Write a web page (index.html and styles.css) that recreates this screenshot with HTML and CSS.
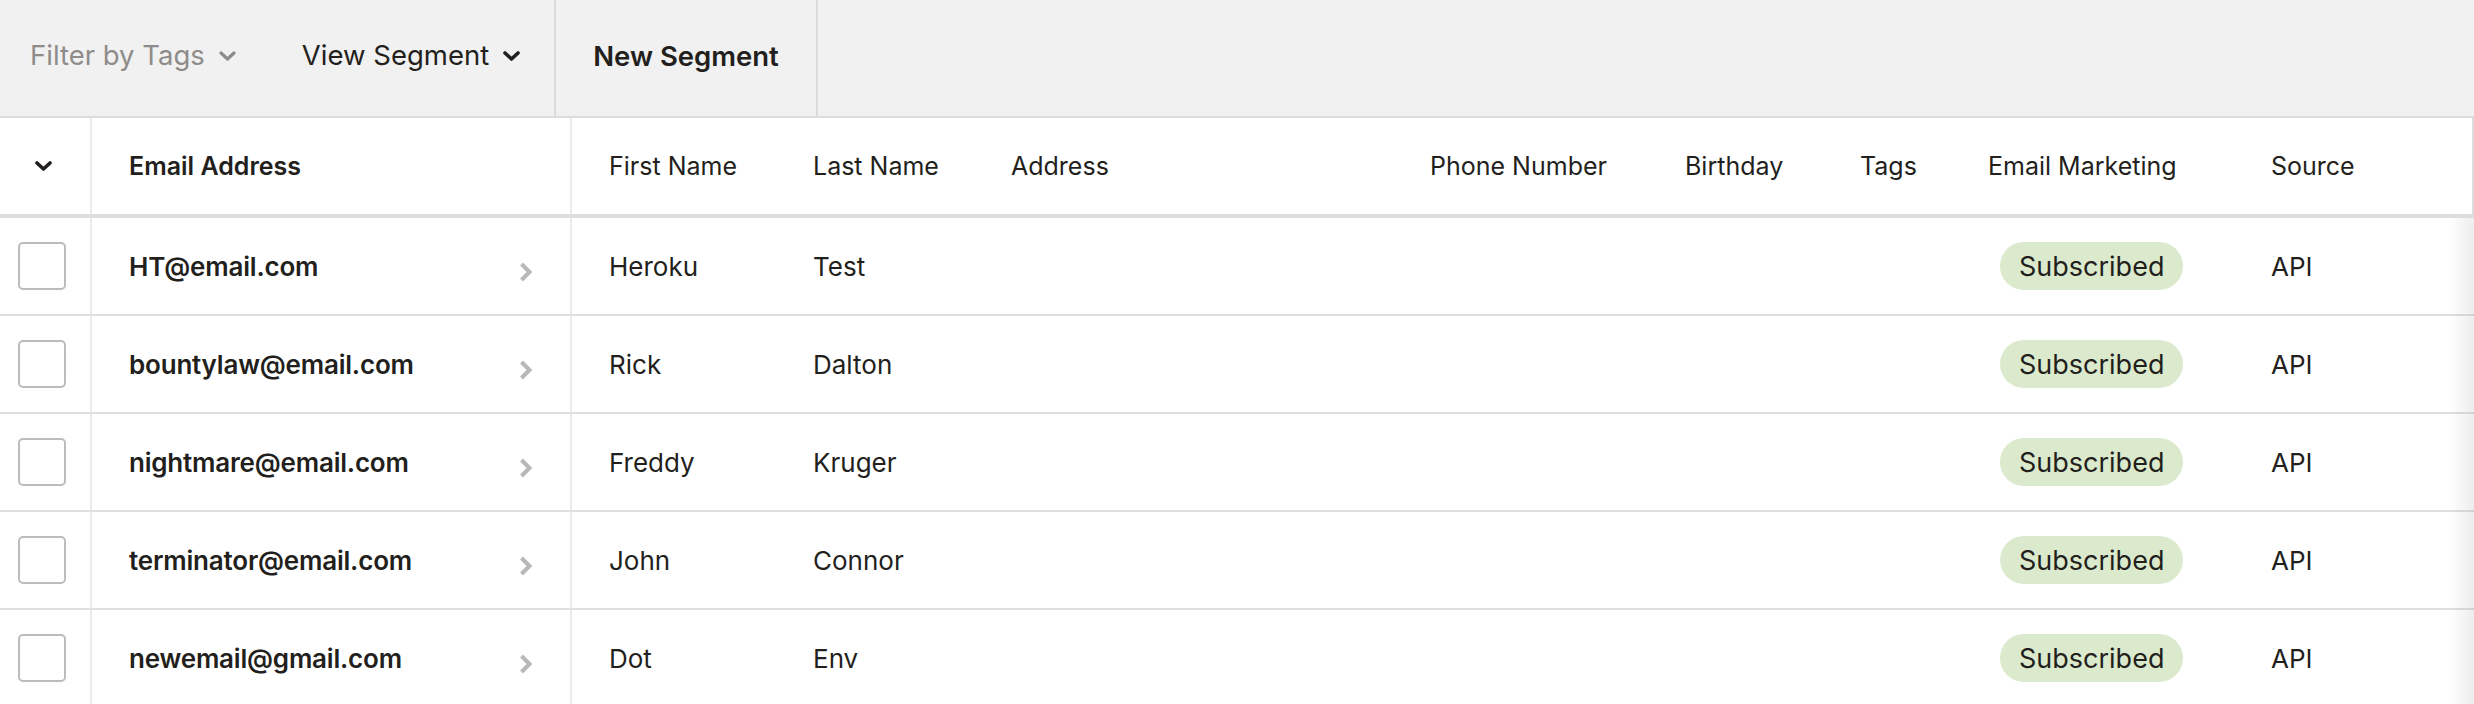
FILE: index.html
```html
<!DOCTYPE html>
<html lang="en">
<head>
<meta charset="utf-8">
<title>Contacts</title>
<link rel="stylesheet" href="styles.css">
</head>
<body>
<div class="page">
  <div class="toolbar">
    <button class="tool tool-filter">Filter by Tags
      <svg class="caret" width="17" height="10" viewBox="0 0 17 10"><path d="M2 2 L8.5 8 L15 2" fill="none" stroke="currentColor" stroke-width="3.2" stroke-linecap="round" stroke-linejoin="round"/></svg>
    </button>
    <button class="tool tool-view">View Segment
      <svg class="caret" width="17" height="10" viewBox="0 0 17 10"><path d="M2 2 L8.5 8 L15 2" fill="none" stroke="currentColor" stroke-width="3.6" stroke-linecap="round" stroke-linejoin="round"/></svg>
    </button>
    <button class="tool tool-new">New Segment</button>
  </div>

  <div class="table">
    <div class="row head">
      <div class="cell c-check"><svg class="caret-dark" width="17" height="10" viewBox="0 0 17 10"><path d="M2 2 L8.5 8 L15 2" fill="none" stroke="currentColor" stroke-width="3.6" stroke-linecap="round" stroke-linejoin="round"/></svg></div>
      <div class="cell c-email">Email Address</div>
      <div class="cell">First Name</div>
      <div class="cell">Last Name</div>
      <div class="cell">Address</div>
      <div class="cell">Phone Number</div>
      <div class="cell">Birthday</div>
      <div class="cell">Tags</div>
      <div class="cell">Email Marketing</div>
      <div class="cell">Source</div>
    </div>

    <div class="body">
      <div class="row">
        <div class="cell c-check"><span class="box"></span></div>
        <div class="cell c-email"><span class="addr">HT@email.com</span><svg class="more" width="16" height="22" viewBox="0 0 16 22"><path d="M3.5 3 L11.5 11 L3.5 19" fill="none" stroke="currentColor" stroke-width="4" stroke-linejoin="miter"/></svg></div>
        <div class="cell">Heroku</div>
        <div class="cell">Test</div>
        <div class="cell"></div>
        <div class="cell"></div>
        <div class="cell"></div>
        <div class="cell"></div>
        <div class="cell"><span class="pill">Subscribed</span></div>
        <div class="cell">API</div>
      </div>
      <div class="row">
        <div class="cell c-check"><span class="box"></span></div>
        <div class="cell c-email"><span class="addr">bountylaw@email.com</span><svg class="more" width="16" height="22" viewBox="0 0 16 22"><path d="M3.5 3 L11.5 11 L3.5 19" fill="none" stroke="currentColor" stroke-width="4" stroke-linejoin="miter"/></svg></div>
        <div class="cell">Rick</div>
        <div class="cell">Dalton</div>
        <div class="cell"></div>
        <div class="cell"></div>
        <div class="cell"></div>
        <div class="cell"></div>
        <div class="cell"><span class="pill">Subscribed</span></div>
        <div class="cell">API</div>
      </div>
      <div class="row">
        <div class="cell c-check"><span class="box"></span></div>
        <div class="cell c-email"><span class="addr">nightmare@email.com</span><svg class="more" width="16" height="22" viewBox="0 0 16 22"><path d="M3.5 3 L11.5 11 L3.5 19" fill="none" stroke="currentColor" stroke-width="4" stroke-linejoin="miter"/></svg></div>
        <div class="cell">Freddy</div>
        <div class="cell">Kruger</div>
        <div class="cell"></div>
        <div class="cell"></div>
        <div class="cell"></div>
        <div class="cell"></div>
        <div class="cell"><span class="pill">Subscribed</span></div>
        <div class="cell">API</div>
      </div>
      <div class="row">
        <div class="cell c-check"><span class="box"></span></div>
        <div class="cell c-email"><span class="addr">terminator@email.com</span><svg class="more" width="16" height="22" viewBox="0 0 16 22"><path d="M3.5 3 L11.5 11 L3.5 19" fill="none" stroke="currentColor" stroke-width="4" stroke-linejoin="miter"/></svg></div>
        <div class="cell">John</div>
        <div class="cell">Connor</div>
        <div class="cell"></div>
        <div class="cell"></div>
        <div class="cell"></div>
        <div class="cell"></div>
        <div class="cell"><span class="pill">Subscribed</span></div>
        <div class="cell">API</div>
      </div>
      <div class="row">
        <div class="cell c-check"><span class="box"></span></div>
        <div class="cell c-email"><span class="addr">newemail@gmail.com</span><svg class="more" width="16" height="22" viewBox="0 0 16 22"><path d="M3.5 3 L11.5 11 L3.5 19" fill="none" stroke="currentColor" stroke-width="4" stroke-linejoin="miter"/></svg></div>
        <div class="cell">Dot</div>
        <div class="cell">Env</div>
        <div class="cell"></div>
        <div class="cell"></div>
        <div class="cell"></div>
        <div class="cell"></div>
        <div class="cell"><span class="pill">Subscribed</span></div>
        <div class="cell">API</div>
      </div>
      <div class="fade"></div>
    </div>
  </div>
</div>
</body>
</html>
```

FILE: styles.css
```css
* { box-sizing: border-box; }

html, body {
  margin: 0;
  padding: 0;
  background: #ffffff;
}

body {
  font-family: Inter, "Noto Sans", "Liberation Sans", sans-serif;
  color: #231f1c;
  overflow: hidden;
}

.page {
  width: 2474px;
  height: 704px;
  overflow: hidden;
}

/* toolbar */
.toolbar {
  display: flex;
  align-items: stretch;
  height: 118px;
  background: #f1f1f1;
  border-bottom: 2px solid #dcdcdc;
}

.tool {
  display: flex;
  align-items: center;
  gap: 14px;
  border: 0;
  background: transparent;
  font-family: inherit;
  font-size: 27.5px;
  color: #231f1c;
  padding: 0 0 6px 0;
  margin: 0;
  cursor: pointer;
}

.tool-filter {
  color: #8e8c8a;
  padding-left: 30px;
}

.tool-view {
  padding-left: 66px;
  padding-right: 34px;
}

.tool-new {
  font-weight: 600;
  padding: 0 37px 4px 37px;
  border-left: 2px solid #dcdcdc;
  border-right: 2px solid #dcdcdc;
}

.caret { display: block; margin-top: 2px; }

/* table */
.table {
  width: 2474px;
}

.row {
  display: grid;
  grid-template-columns: 92px 480px 204px 198px 419px 255px 175px 128px 283px 238px;
  height: 98px;
  border-bottom: 2px solid #e0e0e0;
}

.row.head {
  height: 100px;
  border-bottom: 4px solid #dddddd;
  border-right: 2px solid #dddddd;
}

.row.head .c-email { font-weight: 600; }

.cell {
  display: flex;
  align-items: center;
  padding-left: 37px;
  font-size: 26px;
  white-space: nowrap;
}

.row.head .cell { font-size: 25px; }

.c-check {
  padding-left: 18px;
  border-right: 2px solid #ececec;
}

.row.head .c-check {
  padding-left: 35px;
}

.caret-dark { display: block; color: #231f1c; }

.c-email {
  border-right: 2px solid #ececec;
  padding-right: 36px;
}

.addr { font-weight: 600; letter-spacing: -0.2px; }

.more {
  display: block;
  margin-left: auto;
  margin-top: 12px;
  color: #b8b8b8;
}

.box {
  display: block;
  width: 48px;
  height: 48px;
  border: 2px solid #bcbcbc;
  border-radius: 5px;
  background: #ffffff;
}

.pill {
  display: flex;
  align-items: center;
  height: 48px;
  padding: 0 19px;
  margin-left: 12px;
  border-radius: 24px;
  background: #dbeacd;
  font-size: 27px;
}

.body {
  position: relative;
}

.fade {
  position: absolute;
  top: 0;
  right: 0;
  bottom: 0;
  width: 26px;
  background: linear-gradient(to left, rgba(0,0,0,0.07), rgba(0,0,0,0));
  pointer-events: none;
}
```
